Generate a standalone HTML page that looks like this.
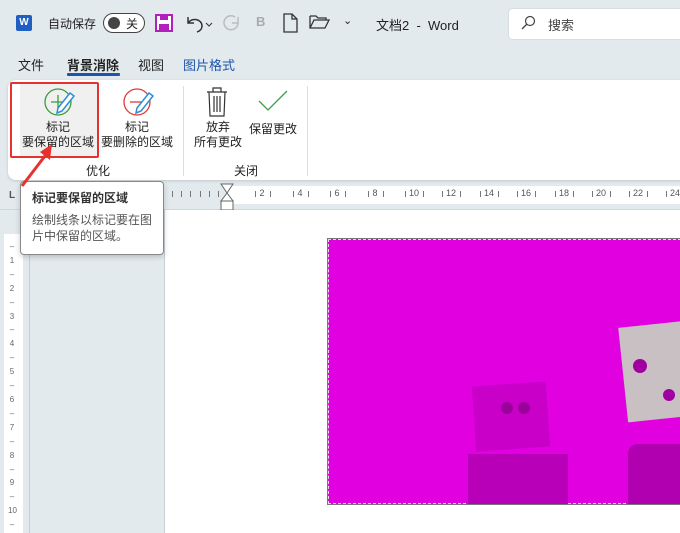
<!DOCTYPE html>
<html><head><meta charset="utf-8"><style>
*{margin:0;padding:0;box-sizing:border-box}
body{width:680px;height:533px;overflow:hidden;background:#e3eaee;font-family:"Liberation Sans","Noto Sans CJK SC",sans-serif;font-size:12px;color:#222;position:relative}
.a{position:absolute}
.t{font-size:12px;white-space:nowrap}
.n{position:absolute;top:188px;font-size:9px;color:#555;width:14px;text-align:center;margin-left:-7px}
.k{position:absolute;top:191px;width:1px;height:6px;background:#777}
</style></head><body>
<!-- title bar -->
<div class="a" style="left:16px;top:15px;width:16px;height:16px;background:#1f5fc4;border-radius:2px;color:#fff;font-size:10px;font-weight:bold;text-align:center;line-height:16px">W</div>
<div class="a t" style="left:48px;top:15px;font-size:12px">自动保存</div>
<div class="a" style="left:103px;top:13px;width:42px;height:20px;border:1.5px solid #444;border-radius:10px;background:#fff"></div>
<div class="a" style="left:108px;top:17px;width:12px;height:12px;border-radius:50%;background:#444"></div>
<div class="a t" style="left:126px;top:15px;font-size:12px">关</div>
<svg class="a" style="left:155px;top:14px" width="18" height="18"><rect x="1" y="1" width="16" height="16" fill="#fff" stroke="#b21fbc" stroke-width="2"/><rect x="5" y="1" width="8" height="5" fill="#b21fbc"/><rect x="4" y="10" width="10" height="7" fill="#b21fbc"/></svg>
<svg class="a" style="left:184px;top:13px" width="30" height="20"><path d="M4 4v6h6M4 10c4-6 14-4 14 3 0 3-2 5-5 6" fill="none" stroke="#333" stroke-width="1.5"/><path d="M22 10l3 3 3-3" fill="none" stroke="#333"/></svg>
<svg class="a" style="left:221px;top:12px" width="22" height="22"><path d="M17 5v6h-6M17 11A7 7 0 1 1 14 5" fill="none" stroke="#bbb" stroke-width="1.5"/></svg>
<div class="a" style="left:256px;top:14px;color:#aaa;font-weight:bold;font-size:13px">B</div>
<svg class="a" style="left:282px;top:13px" width="16" height="20"><path d="M2 1h8l5 5v13H2z M10 1v5h5" fill="none" stroke="#333" stroke-width="1.3"/></svg>
<svg class="a" style="left:309px;top:14px" width="22" height="16"><path d="M1 2h6l2 2h8v2 M1 2v12h15l4-8H5L1 14" fill="none" stroke="#333" stroke-width="1.3"/></svg>
<div class="a" style="left:343px;top:14px;font-size:11px">⌄</div>
<div class="a t" style="left:376px;top:15px;font-size:13px">文档2 &nbsp;- &nbsp;Word</div>
<div class="a" style="left:508px;top:8px;width:180px;height:32px;background:#fff;border:1px solid #d8dde2;border-radius:5px"></div>
<svg class="a" style="left:520px;top:15px" width="16" height="16"><circle cx="10" cy="6" r="4.5" fill="none" stroke="#444" stroke-width="1.2"/><path d="M7 9l-5 5" stroke="#444" stroke-width="1.3"/></svg>
<div class="a t" style="left:548px;top:15px;font-size:13px;color:#444">搜索</div>
<!-- tabs -->
<div class="a t" style="left:18px;top:55px;font-size:13px">文件</div>
<div class="a t" style="left:67px;top:55px;font-size:13px;font-weight:bold">背景消除</div>
<div class="a" style="left:67px;top:73px;width:53px;height:3px;background:#1e55a8;border-radius:1px"></div>
<div class="a t" style="left:138px;top:55px;font-size:13px">视图</div>
<div class="a t" style="left:183px;top:55px;font-size:13px;color:#1e55a8">图片格式</div>
<!-- ribbon -->
<div class="a" style="left:8px;top:80px;width:680px;height:100px;background:#fff;border-radius:8px;box-shadow:0 1px 3px rgba(0,0,0,.15)"></div>
<div class="a" style="left:20px;top:84px;width:78px;height:72px;background:#f0f0f0"></div>
<div class="a" style="left:10px;top:82px;width:89px;height:76px;border:2px solid #e8312e;border-radius:2px"></div>
<svg class="a" style="left:40px;top:85px" width="36" height="36"><circle cx="18" cy="17" r="13" fill="none" stroke="#3a9d3a" stroke-width="1.3"/><path d="M18 10v14M11 17h14" stroke="#3a9d3a" stroke-width="1.3"/><path d="M30 8l4 3-12 15-5 2 1-5z" fill="#fff" stroke="#2b8fd8" stroke-width="1.5"/></svg>
<svg class="a" style="left:119px;top:85px" width="36" height="36"><circle cx="18" cy="17" r="13" fill="none" stroke="#e03a3a" stroke-width="1.3"/><path d="M11 17h14" stroke="#e03a3a" stroke-width="1.3"/><path d="M30 8l4 3-12 15-5 2 1-5z" fill="#fff" stroke="#2b8fd8" stroke-width="1.5"/></svg>
<div class="a t" style="left:0;top:120px;width:116px;text-align:center;line-height:15px">标记<br>要保留的区域</div>
<div class="a t" style="left:98px;top:120px;width:78px;text-align:center;line-height:15px">标记<br>要删除的区域</div>
<div class="a t" style="left:86px;top:162px">优化</div>
<div class="a" style="left:183px;top:86px;width:1px;height:90px;background:#ddd"></div>
<svg class="a" style="left:204px;top:86px" width="26" height="32"><path d="M3 6h20M9 6V2h8v4M5 6l1 24h14l1-24M10 10v16M13 10v16M16 10v16" fill="none" stroke="#333" stroke-width="1.2"/></svg>
<svg class="a" style="left:256px;top:88px" width="34" height="26"><path d="M3 13l9 9L31 3" fill="none" stroke="#3aa046" stroke-width="1.3"/></svg>
<div class="a t" style="left:190px;top:120px;width:56px;text-align:center;line-height:15px">放弃<br>所有更改</div>
<div class="a t" style="left:249px;top:120px">保留更改</div>
<div class="a t" style="left:234px;top:162px">关闭</div>
<div class="a" style="left:307px;top:86px;width:1px;height:90px;background:#ddd"></div>
<!-- ruler -->
<div class="a" style="left:0;top:209px;width:680px;height:1px;background:#d0d6db"></div>
<div class="a" style="left:166px;top:186px;width:514px;height:18px;background:#fff"></div>
<div class="a" style="left:9px;top:190px;font-size:10px;font-weight:bold;color:#555">L</div>
<div class="a" style="left:166px;top:186px;width:62px;height:18px;background:#e3eaee"></div>
<div class="k" style="left:172px"></div><div class="k" style="left:181px"></div><div class="k" style="left:190px"></div><div class="k" style="left:200px"></div><div class="k" style="left:209px"></div><div class="k" style="left:218px"></div>
<svg class="a" style="left:220px;top:183px" width="14" height="28"><path d="M1 1h12L7 10z M7 10l-6 8h12z M1 18h12v9H1z" fill="#fff" stroke="#666"/></svg>
<div class="k" style="left:255px"></div><div class="k" style="left:270px"></div><div class="k" style="left:293px"></div><div class="k" style="left:308px"></div><div class="k" style="left:330px"></div><div class="k" style="left:345px"></div><div class="k" style="left:368px"></div><div class="k" style="left:383px"></div><div class="k" style="left:405px"></div><div class="k" style="left:423px"></div><div class="k" style="left:442px"></div><div class="k" style="left:460px"></div><div class="k" style="left:480px"></div><div class="k" style="left:498px"></div><div class="k" style="left:517px"></div><div class="k" style="left:535px"></div><div class="k" style="left:555px"></div><div class="k" style="left:573px"></div><div class="k" style="left:592px"></div><div class="k" style="left:610px"></div><div class="k" style="left:629px"></div><div class="k" style="left:647px"></div><div class="k" style="left:666px"></div>
<div class="n" style="left:262px">2</div><div class="n" style="left:300px">4</div><div class="n" style="left:337px">6</div><div class="n" style="left:375px">8</div><div class="n" style="left:414px">10</div><div class="n" style="left:451px">12</div><div class="n" style="left:489px">14</div><div class="n" style="left:526px">16</div><div class="n" style="left:564px">18</div><div class="n" style="left:601px">20</div><div class="n" style="left:638px">22</div><div class="n" style="left:675px">24</div>
<!-- vertical ruler & doc -->
<div class="a" style="left:4px;top:234px;width:19px;height:299px;background:#fff"></div>
<div class="a" style="left:8px;top:240px;width:8px;font-size:8px;color:#666;line-height:13.9px;text-align:center">–<br>1<br>–<br>2<br>–<br>3<br>–<br>4<br>–<br>5<br>–<br>6<br>–<br>7<br>–<br>8<br>–<br>9<br>–<br>10<br>–</div>
<div class="a" style="left:29px;top:210px;width:1px;height:323px;background:#c8cfd4"></div>
<div class="a" style="left:164px;top:210px;width:1px;height:323px;background:#c8cfd4"></div>
<div class="a" style="left:165px;top:210px;width:515px;height:323px;background:#fff"></div>
<!-- picture -->
<div class="a" style="left:327px;top:238px;width:360px;height:267px;border:1px solid #777;background:#e000e0;overflow:hidden">
<div class="a" style="left:0;top:0;right:0;bottom:0;border:1px dashed #ddd"></div>
<div class="a" style="left:146px;top:145px;width:74px;height:65px;background:#c800c8;transform:rotate(-4deg)"></div>
<div class="a" style="left:173px;top:163px;width:12px;height:12px;border-radius:50%;background:#9a009a"></div>
<div class="a" style="left:190px;top:163px;width:12px;height:12px;border-radius:50%;background:#9a009a"></div>
<div class="a" style="left:140px;top:215px;width:100px;height:60px;background:#b800b8"></div>
<div class="a" style="left:295px;top:85px;width:70px;height:95px;background:#c8c0c2;transform:rotate(-6deg)"></div>
<div class="a" style="left:305px;top:120px;width:14px;height:14px;border-radius:50%;background:#a000a0"></div>
<div class="a" style="left:335px;top:150px;width:12px;height:12px;border-radius:50%;background:#a000a0"></div>
<div class="a" style="left:300px;top:205px;width:70px;height:70px;background:#b000b0;border-radius:10px"></div>
</div>
<!-- tooltip -->
<div class="a" style="left:20px;top:181px;width:144px;height:74px;background:#fff;border:1px solid #888;border-radius:4px;box-shadow:0 2px 6px rgba(0,0,0,.2)"></div>
<div class="a t" style="left:32px;top:189px;font-weight:bold;color:#333">标记要保留的区域</div>
<div class="a t" style="left:32px;top:212px;color:#555;line-height:16px">绘制线条以标记要在图<br>片中保留的区域。</div>
<!-- arrow -->
<svg class="a" style="left:18px;top:140px" width="40" height="50"><path d="M4 46L30 12" stroke="#e8312e" stroke-width="3"/><path d="M34 4L22 12l10 8z" fill="#e8312e"/></svg>
</body></html>
